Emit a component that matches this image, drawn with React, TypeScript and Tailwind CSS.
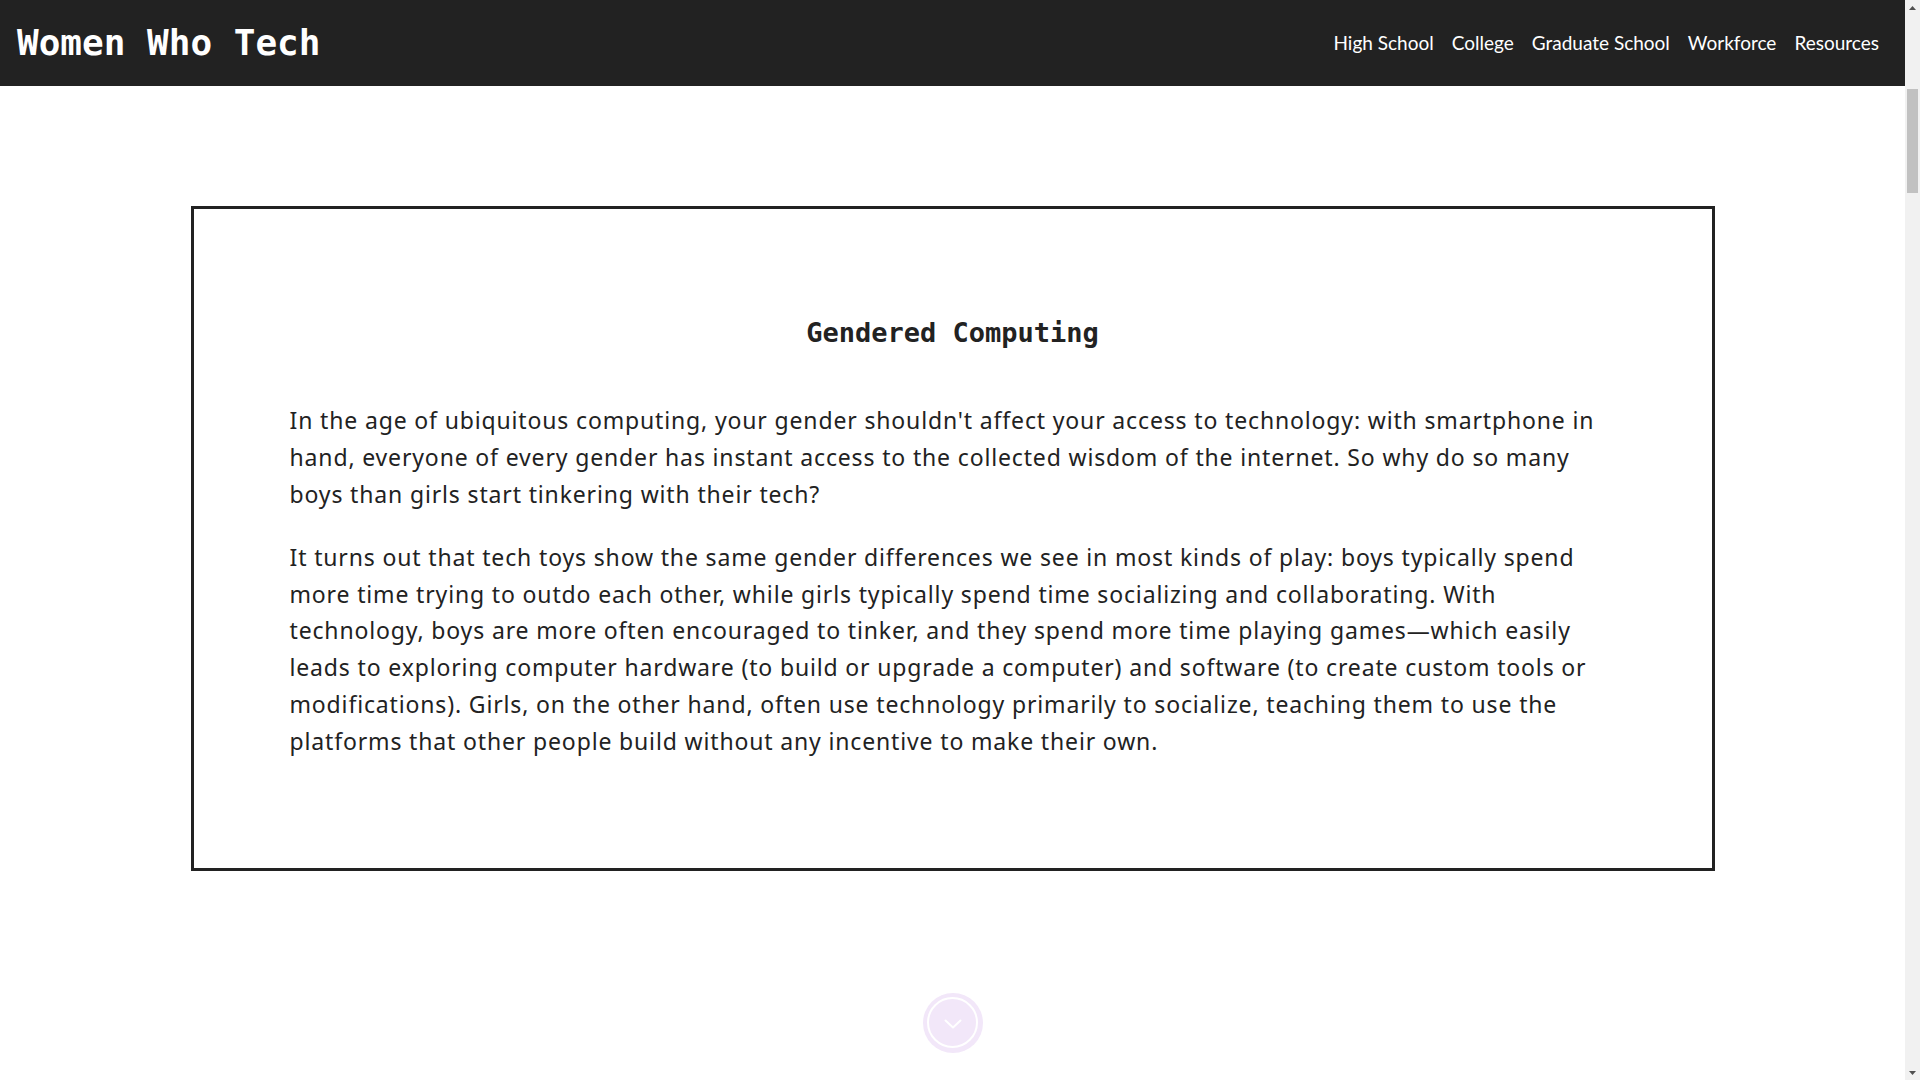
const links = ["High School", "College", "Graduate School", "Workforce", "Resources"];

function Chevron() {
  return (
    <svg width="18" height="10" viewBox="0 0 18 10" fill="none">
      <path d="M1.5 1.5 L9 8.5 L16.5 1.5" stroke="white" strokeWidth="2" strokeLinecap="round" strokeLinejoin="round" />
    </svg>
  );
}

// classic scrollbar as seen in the screenshot
function Scrollbar() {
  return (
    <div className="w-[15px] h-full bg-[#f1f1f1] flex flex-col shrink-0">
      <div className="h-[15px] flex items-center justify-center">
        <svg width="7" height="4" viewBox="0 0 7 4">
          <polygon points="0,4 3.5,0 7,4" fill="#505050" />
        </svg>
      </div>
      <div className="flex-1">
        <div className="mt-[74px] mx-[2px] h-[104px] bg-[#c1c1c1]" />
      </div>
      <div className="h-[15px] flex items-center justify-center">
        <svg width="7" height="4" viewBox="0 0 7 4">
          <polygon points="0,0 3.5,4 7,0" fill="#505050" />
        </svg>
      </div>
    </div>
  );
}

export default function App() {
  return (
    <div className="h-screen flex overflow-hidden bg-white text-[#222]">
      <div className="flex-1 h-full overflow-hidden">
        <header className="h-[86px] bg-[#222] flex items-center justify-between pl-[17px] pr-[26px]">
          <a href="#" className="font-['DejaVu_Sans_Mono',monospace] font-bold text-[36px] text-white">
            Women Who Tech
          </a>
          <nav className="flex items-center gap-[18px] font-['Lato',sans-serif] text-[19px] text-white">
            {links.map((l) => (
              <a key={l} href={`#${l.toLowerCase().replace(" ", "-")}`}>
                {l}
              </a>
            ))}
          </nav>
        </header>

        <main>
          <section className="pt-[120px]">
            <div className="mx-auto w-[80%] border-[3px] border-[#222] px-[96px] pt-[108px] pb-[108px]">
              <h2 className="text-center font-['DejaVu_Sans_Mono',monospace] font-bold text-[27px] leading-[31.4px] mb-[54px]">
                Gendered Computing
              </h2>
              <div className="font-['Noto_Sans',sans-serif] text-[23px] leading-[36.8px] tracking-[0.85px] space-y-[26px]">
                <p>
                  In the age of ubiquitous computing, your gender shouldn't affect your access to technology: with
                  smartphone in hand, everyone of every gender has instant access to the collected wisdom of the
                  internet. So why do so many boys than girls start tinkering with their tech?
                </p>
                <p>
                  It turns out that tech toys show the same gender differences we see in most kinds of play: boys
                  typically spend more time trying to outdo each other, while girls typically spend time socializing
                  and collaborating. With technology, boys are more often encouraged to tinker, and they spend more
                  time playing games—which easily leads to exploring computer hardware (to build or upgrade a
                  computer) and software (to create custom tools or modifications). Girls, on the other hand, often
                  use technology primarily to socialize, teaching them to use the platforms that other people build
                  without any incentive to make their own.
                </p>
              </div>
            </div>

            <div className="flex justify-center mt-[122px]">
              <button className="w-[60px] h-[60px] rounded-full bg-[#f2e7f9] flex items-center justify-center">
                <span className="w-[51px] h-[51px] rounded-full border-2 border-white flex items-center justify-center pt-[2px]">
                  <Chevron />
                </span>
              </button>
            </div>
          </section>
        </main>
      </div>
      <Scrollbar />
    </div>
  );
}
